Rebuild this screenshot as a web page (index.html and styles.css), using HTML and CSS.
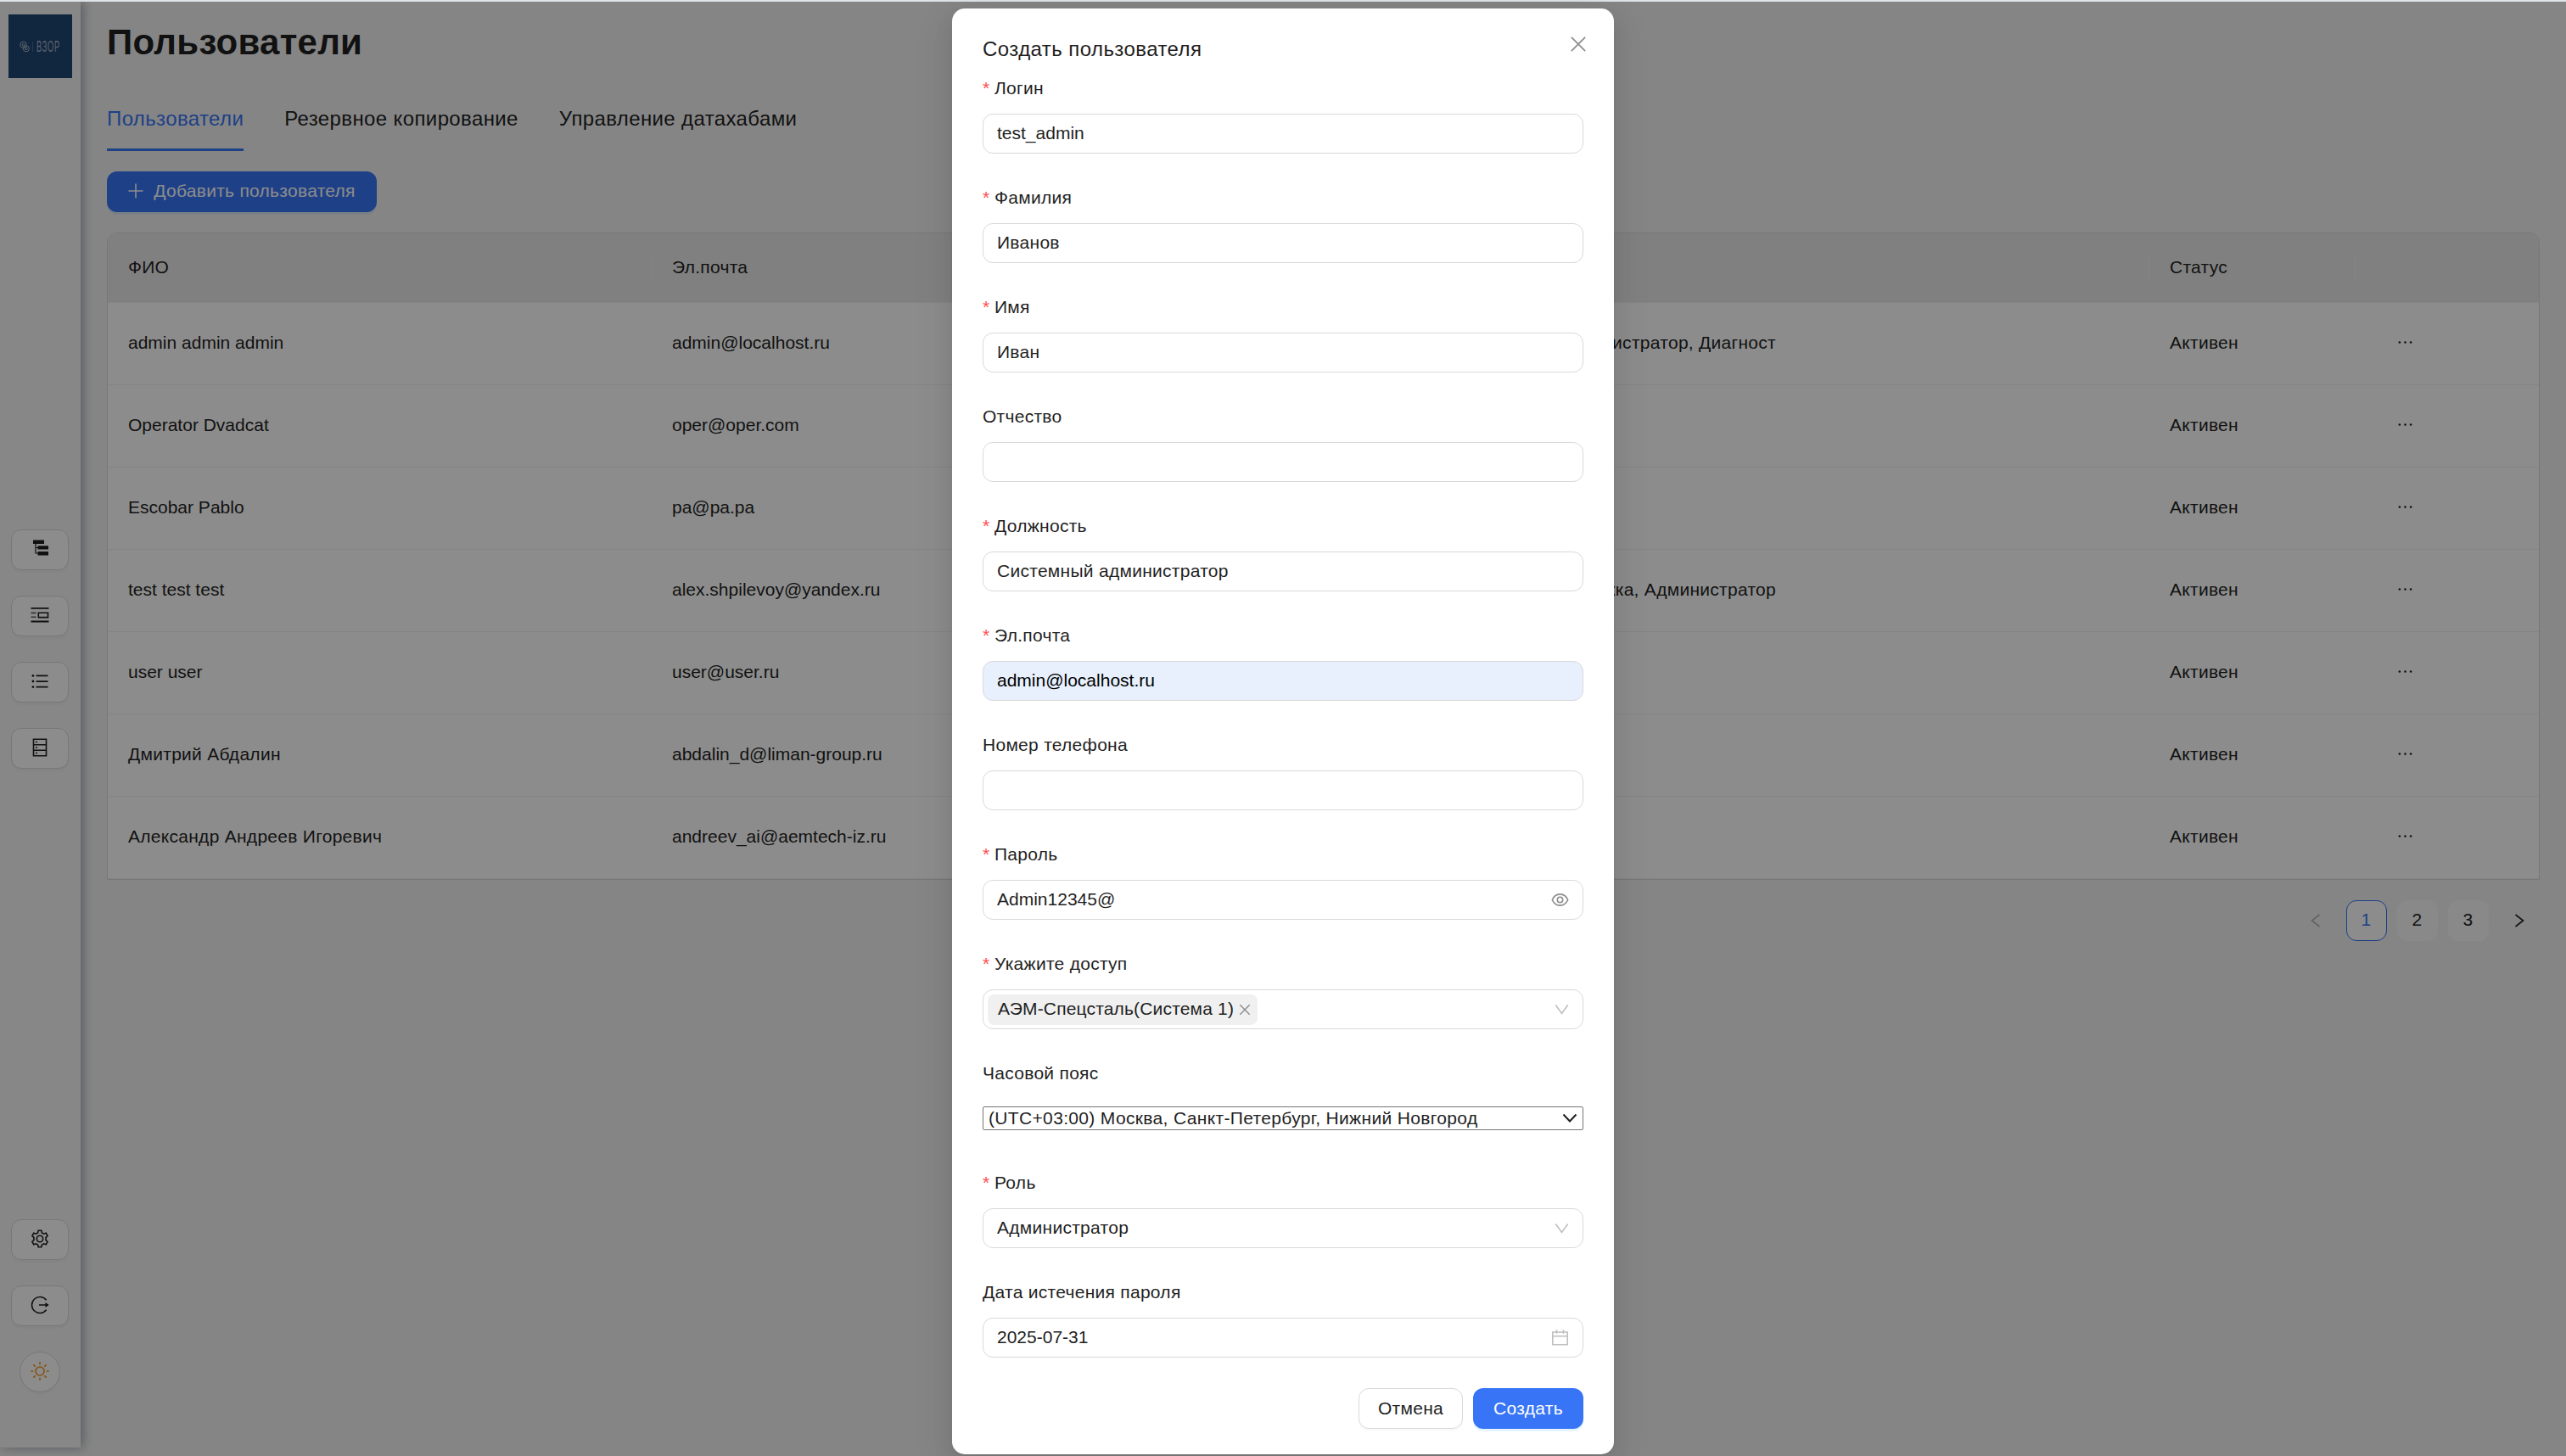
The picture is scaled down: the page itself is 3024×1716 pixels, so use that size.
FILE: index.html
```html
<!DOCTYPE html>
<html lang="ru">

<head>
    <meta charset="UTF-8">
    <meta name="viewport" content="width=device-width, initial-scale=1.0">
    <title>Пользователи</title>
    <link rel="stylesheet" href="styles.css">
</head>

<body>
    <!-- shared icons -->
    <svg class="sprite">
        <symbol id="i-close" viewBox="0 0 16 16"><path d="M1.5 1.5l13 13M14.5 1.5l-13 13" /></symbol>
        <symbol id="i-down" viewBox="0 0 16 16"><path d="M1.2 3.4l6.8 9.2 6.8-9.2" /></symbol>
        <symbol id="i-dots" viewBox="0 0 21 21"><circle cx="3.9" cy="10.5" r="1.3" /><circle cx="10.5" cy="10.5" r="1.3" /><circle cx="17.1" cy="10.5" r="1.3" /></symbol>
    </svg>

    <div class="layout">
        <aside class="sidebar">
            <div class="logo">
                <svg class="logo-gears" viewBox="0 0 12 14"><circle cx="4.5" cy="4.8" r="3.8" /><circle cx="4.5" cy="4.8" r="1.4" /><circle cx="7.8" cy="9.4" r="3.5" /><circle cx="7.8" cy="9.4" r="1.3" /></svg>
                <span class="logo-line"></span>
                <span class="logo-text">ВЗОР</span>
            </div>
            <nav class="menu">
                <button class="menu-btn">
                    <svg class="icon" viewBox="0 1.5 22 22"><path class="solid" d="M3 2h13v4.500H3zM8.500 8.800H21v4.200H8.500zM8.500 15.500H21v4.500H8.500z" /><path class="thin" d="M6 6v11.500h3M6 11h3" /></svg>
                </button>
                <button class="menu-btn">
                    <svg class="icon" viewBox="0 0 22 22"><path class="solid" d="M.5 2h21v1.800H.5zM.5 17.600h21v1.800H.5z" /><path class="solid faded" d="M.5 7.600h6v1.600h-6zM.5 12.400h6v1.600h-6z" /><path d="M9.300 8.200h11.200v5.400H9.300z" /></svg>
                </button>
                <button class="menu-btn">
                    <svg class="icon" viewBox="0 0 22 22"><path class="solid" d="M6.500 3.600h14v1.700h-14zM6.500 10.200h14v1.700h-14zM6.500 16.800h14v1.700h-14z" /><circle class="solid" cx="2.900" cy="4.400" r="1.400" /><circle class="solid" cx="2.900" cy="11" r="1.400" /><circle class="solid" cx="2.900" cy="17.600" r="1.400" /></svg>
                </button>
                <button class="menu-btn">
                    <svg class="icon" viewBox="0 0 22 22"><path d="M3.500 1.300h15v19.500h-15zM3.500 7.800h15M3.500 14.300h15" /><circle class="solid" cx="7" cy="4.600" r="1" /><circle class="solid" cx="7" cy="11.100" r="1" /><circle class="solid" cx="7" cy="17.500" r="1" /></svg>
                </button>
            </nav>
            <nav class="menu menu-bottom">
                <button class="menu-btn">
                    <svg class="icon" viewBox="0 0 22 22"><path d="M9.200 1.300h3.600l.6 2.700 2.200 1.200 2.600-.9 1.900 3.200-2 1.900v3.200l2 1.900-1.900 3.200-2.600-.9-2.200 1.200-.6 2.700H9.200l-.6-2.700-2.200-1.200-2.600.9-1.900-3.200 2-1.900V9.400l-2-1.900 1.900-3.200 2.600.9L8.600 4z" /><circle cx="11" cy="11" r="3.700" /></svg>
                </button>
                <button class="menu-btn">
                    <svg class="icon" viewBox="0 0 22 22"><path d="M18.600 5.300a9.500 9.500 0 1 0 0 11.400M10 11h8" /><path class="solid" d="M17.500 8l4.200 3-4.200 3z" /></svg>
                </button>
                <button class="menu-btn round">
                    <svg class="icon sun" viewBox="0 0 22 22"><circle cx="11" cy="11" r="5" /><path d="M11 .3v3M11 18.700v3M.3 11h3M18.700 11h3M3.400 3.400l2.200 2.200M16.400 16.400l2.200 2.200M3.400 18.600l2.200-2.200M16.400 5.600l2.200-2.200" /></svg>
                </button>
            </nav>
        </aside>

        <main class="content">
            <h1 class="title">Пользователи</h1>
            <div class="tabs">
                <div class="tab active">Пользователи</div>
                <div class="tab">Резервное копирование</div>
                <div class="tab">Управление датахабами</div>
            </div>
            <button class="btn btn-primary btn-add">
                <svg class="icon-plus" viewBox="0 0 18 18"><path d="M9 .5v17M.5 9h17" /></svg>
                Добавить пользователя
            </button>

            <table class="users">
                <colgroup>
                    <col class="col-name">
                    <col class="col-mail">
                    <col class="col-role">
                    <col class="col-status">
                    <col class="col-actions">
                </colgroup>
                <thead>
                    <tr>
                        <th>ФИО</th>
                        <th>Эл.почта</th>
                        <th></th>
                        <th>Статус</th>
                        <th></th>
                    </tr>
                </thead>
                <tbody>
                    <tr>
                        <td class="latin">admin admin admin</td>
                        <td class="latin">admin@localhost.ru</td>
                        <td class="role">Администратор, Диагност</td>
                        <td>Активен</td>
                        <td class="actions"><svg class="dots"><use href="#i-dots" /></svg></td>
                    </tr>
                    <tr>
                        <td class="latin">Operator Dvadcat</td>
                        <td class="latin">oper@oper.com</td>
                        <td class="role"></td>
                        <td>Активен</td>
                        <td class="actions"><svg class="dots"><use href="#i-dots" /></svg></td>
                    </tr>
                    <tr>
                        <td class="latin">Escobar Pablo</td>
                        <td class="latin">pa@pa.pa</td>
                        <td class="role"></td>
                        <td>Активен</td>
                        <td class="actions"><svg class="dots"><use href="#i-dots" /></svg></td>
                    </tr>
                    <tr>
                        <td class="latin">test test test</td>
                        <td class="latin">alex.shpilevoy@yandex.ru</td>
                        <td class="role">Техподдержка, Администратор</td>
                        <td>Активен</td>
                        <td class="actions"><svg class="dots"><use href="#i-dots" /></svg></td>
                    </tr>
                    <tr>
                        <td class="latin">user user</td>
                        <td class="latin">user@user.ru</td>
                        <td class="role"></td>
                        <td>Активен</td>
                        <td class="actions"><svg class="dots"><use href="#i-dots" /></svg></td>
                    </tr>
                    <tr>
                        <td>Дмитрий Абдалин</td>
                        <td class="latin">abdalin_d@liman-group.ru</td>
                        <td class="role"></td>
                        <td>Активен</td>
                        <td class="actions"><svg class="dots"><use href="#i-dots" /></svg></td>
                    </tr>
                    <tr>
                        <td>Александр Андреев Игоревич</td>
                        <td class="latin">andreev_ai@aemtech-iz.ru</td>
                        <td class="role"></td>
                        <td>Активен</td>
                        <td class="actions"><svg class="dots"><use href="#i-dots" /></svg></td>
                    </tr>
                </tbody>
            </table>

            <div class="pagination">
                <span class="page arrow disabled"><svg viewBox="0 0 12 16"><path d="M10.500 1L1.500 8l9 7" /></svg></span>
                <span class="page current">1</span>
                <span class="page">2</span>
                <span class="page">3</span>
                <span class="page arrow"><svg viewBox="0 0 12 16"><path d="M1.500 1l9 7-9 7" /></svg></span>
            </div>
        </main>
    </div>

    <div class="mask">
        <div class="modal">
            <div class="modal-title">Создать пользователя</div>
            <svg class="modal-close"><use href="#i-close" /></svg>

            <form class="form">
                <div class="form-item">
                    <label class="required">Логин</label>
                    <div class="input latin">test_admin</div>
                </div>
                <div class="form-item">
                    <label class="required">Фамилия</label>
                    <div class="input">Иванов</div>
                </div>
                <div class="form-item">
                    <label class="required">Имя</label>
                    <div class="input">Иван</div>
                </div>
                <div class="form-item">
                    <label>Отчество</label>
                    <div class="input"></div>
                </div>
                <div class="form-item">
                    <label class="required">Должность</label>
                    <div class="input">Системный администратор</div>
                </div>
                <div class="form-item">
                    <label class="required">Эл.почта</label>
                    <div class="input latin autofill">admin@localhost.ru</div>
                </div>
                <div class="form-item">
                    <label>Номер телефона</label>
                    <div class="input"></div>
                </div>
                <div class="form-item">
                    <label class="required">Пароль</label>
                    <div class="input latin">
                        Admin12345@
                        <svg class="suffix eye" viewBox="0 0 21 21"><path d="M1.300 10.500C3.300 6 6.500 3.900 10.500 3.900s7.200 2.100 9.200 6.600c-2 4.500-5.200 6.600-9.200 6.600s-7.200-2.100-9.200-6.600z" /><circle cx="10.500" cy="10.500" r="3.200" /></svg>
                    </div>
                </div>
                <div class="form-item">
                    <label class="required">Укажите доступ</label>
                    <div class="input multiple">
                        <span class="tag">АЭМ-Спецсталь(Система 1)<svg class="tag-close"><use href="#i-close" /></svg></span>
                        <svg class="suffix arrow-down"><use href="#i-down" /></svg>
                    </div>
                </div>
                <div class="form-item">
                    <label>Часовой пояс</label>
                    <div class="native-row">
                        <div class="native-select">
                            <span>(UTC+03:00) Москва, Санкт-Петербург, Нижний Новгород</span>
                            <svg class="native-arrow" viewBox="0 0 18 12"><path d="M1.500 1.500L9 9.500l7.500-8" /></svg>
                        </div>
                    </div>
                </div>
                <div class="form-item">
                    <label class="required">Роль</label>
                    <div class="input">
                        Администратор
                        <svg class="suffix arrow-down"><use href="#i-down" /></svg>
                    </div>
                </div>
                <div class="form-item">
                    <label>Дата истечения пароля</label>
                    <div class="input latin">
                        2025-07-31
                        <svg class="suffix calendar" viewBox="0 0 21 21"><path d="M1.800 4h17.400v14.800H1.800zM1.800 8.800h17.400M6.500 1.300v4.400M14.500 1.300v4.400" /></svg>
                    </div>
                </div>
            </form>

            <div class="modal-footer">
                <button class="btn btn-default">Отмена</button>
                <button class="btn btn-primary btn-create">Создать</button>
            </div>
        </div>
    </div>
</body>

</html>
```

FILE: styles.css
```css
* {
    box-sizing: border-box;
}

body {
    margin: 0;
    height: 1716px;
    overflow: hidden;
    border-top: 2px solid #dde3e8;
    background-color: #f3f3f3;
    font-family: 'Liberation Sans', Arial, sans-serif;
    font-size: 21px;
    line-height: 33px;
    letter-spacing: 0.28px;
    color: #1f1f1f;
}

svg {
    display: block;
    fill: none;
    stroke: currentColor;
    stroke-width: 1.6;
}

button {
    font-family: inherit;
    font-size: inherit;
    line-height: inherit;
    letter-spacing: inherit;
    color: inherit;
}

.sprite {
    display: none;
}

.latin {
    letter-spacing: 0;
}

.solid {
    fill: currentColor;
    stroke: none;
}

.thin {
    stroke-width: 1.2;
}

.faded {
    opacity: 0.7;
}

.layout {
    display: flex;
    height: 1714px;
}

/* Sidebar */
.sidebar {
    width: 95px;
    height: 1704px;
    flex-shrink: 0;
    display: flex;
    flex-direction: column;
    align-items: center;
    padding-top: 15px;
    background-color: #f6f6f6;
    box-shadow: 3px 0 12px rgba(0, 21, 41, 0.35);
}

.logo {
    display: flex;
    align-items: center;
    gap: 3px;
    width: 75px;
    height: 75px;
    padding-left: 13px;
    background-color: #1f4573;
    color: #a9b6c6;
}

.logo-gears {
    width: 12px;
    height: 14px;
    stroke-width: 1;
}

.logo-line {
    width: 1px;
    height: 12px;
    margin-right: 1px;
    background-color: #4d678a;
}

.logo-text {
    width: 28px;
    font-size: 18px;
    line-height: 18px;
    letter-spacing: 1.5px;
    transform: scaleX(0.52);
    transform-origin: left;
}

.menu {
    display: flex;
    flex-direction: column;
    align-items: center;
    gap: 30px;
    margin-top: 532px;
    margin-right: 1px;
}

.menu-bottom {
    margin-top: 531px;
}

.menu-btn {
    display: flex;
    align-items: center;
    justify-content: center;
    width: 68px;
    height: 48px;
    padding: 0 0 3px;
    border: 1px solid #d9d9d9;
    border-radius: 12px;
    background-color: #fff;
    box-shadow: 0 3px 0 rgba(0, 0, 0, 0.02);
}

.menu-bottom .menu-btn {
    padding-bottom: 2px;
}

.menu-btn.round {
    width: 48px;
    border-radius: 50%;
}

.icon {
    width: 22px;
    height: 22px;
}

.sun {
    color: #f0971c;
}

/* Content */
.content {
    flex: 1;
    padding: 16px 31px 0;
}

.title {
    margin: 0;
    font-size: 42px;
    line-height: 63px;
    font-weight: 700;
}

.tabs {
    display: flex;
    gap: 48px;
    height: 97px;
    padding-top: 40px;
    border-bottom: 1px solid #f0f0f0;
    font-size: 24px;
    line-height: 38px;
    letter-spacing: 0.38px;
}

.tab {
    height: 57px;
    white-space: nowrap;
}

.tab.active {
    color: #3875f6;
    border-bottom: 3px solid #3875f6;
}

.btn {
    display: flex;
    align-items: center;
    justify-content: center;
    height: 48px;
    border: 1px solid #d9d9d9;
    border-radius: 12px;
    padding: 0 0 2px;
    background-color: #fff;
    box-shadow: 0 3px 0 rgba(0, 0, 0, 0.02);
    white-space: nowrap;
}

.btn-primary {
    border: none;
    background-color: #3875f6;
    color: #fff;
    box-shadow: 0 3px 0 rgba(5, 145, 255, 0.1);
}

.btn-add {
    width: 318px;
    margin-top: 24px;
    padding-bottom: 3px;
    gap: 12px;
}

.icon-plus {
    width: 18px;
    height: 18px;
}

/* Table */
.users {
    width: 2867px;
    margin-top: 24px;
    table-layout: fixed;
    border-collapse: separate;
    border-spacing: 0;
    border: 1px solid #d9d9d9;
    border-radius: 12px 12px 0 0;
    background-color: #fff;
}

.col-name {
    width: 641px;
}

.col-mail {
    width: 640px;
}

.col-status {
    width: 243px;
}

.col-actions {
    width: 216px;
}

.users th {
    height: 82px;
    padding: 0 24px 2px;
    text-align: left;
    font-weight: 400;
    background: linear-gradient(#f0f0f0, #f0f0f0) right center / 1px 33px no-repeat #e9e9e9;
    border-bottom: 1px solid #f0f0f0;
}

.users th:nth-child(2),
.users th:last-child {
    background-image: none;
}

.users th:first-child {
    border-top-left-radius: 11px;
}

.users th:last-child {
    border-top-right-radius: 11px;
}

.users td {
    height: 97px;
    padding: 0 24px 4px;
    border-bottom: 1px solid #f0f0f0;
    white-space: nowrap;
}

.users .role {
    text-align: right;
    padding-right: 440px;
}

.users .actions {
    padding-left: 48px;
}

.dots {
    width: 21px;
    height: 21px;
    fill: currentColor;
    stroke: none;
}

/* Pagination */
.pagination {
    display: flex;
    justify-content: flex-end;
    gap: 12px;
    margin-top: 24px;
}

.page {
    display: flex;
    align-items: center;
    justify-content: center;
    width: 48px;
    height: 48px;
    padding: 0 1px 3px 0;
    border-radius: 12px;
    background-color: #f9f9f9;
}

.page.current {
    border: 1px solid #3875f6;
    color: #3875f6;
    background-color: #fff;
}

.page.arrow {
    padding: 0;
    background: none;
}

.page.arrow svg {
    width: 12px;
    height: 16px;
}

.page.disabled {
    color: #b5b5b5;
}

/* Modal */
.mask {
    position: absolute;
    top: 2px;
    left: 0;
    width: 3024px;
    height: 1714px;
    display: flex;
    justify-content: center;
    align-items: flex-start;
    padding-top: 8px;
    background-color: rgba(0, 0, 0, 0.45);
}

.modal {
    position: relative;
    width: 780px;
    height: 1704px;
    padding: 30px 36px;
    border-radius: 15px;
    background-color: #fff;
    box-shadow: 0 9px 24px rgba(0, 0, 0, 0.08), 0 5px 9px -6px rgba(0, 0, 0, 0.12), 0 14px 42px 12px rgba(0, 0, 0, 0.05);
}

.modal-title {
    height: 36px;
    margin-bottom: 12px;
    font-size: 24px;
    line-height: 36px;
    letter-spacing: 0.43px;
}

.modal-close {
    position: absolute;
    top: 32px;
    right: 32px;
    width: 20px;
    height: 20px;
    color: #8c8c8c;
    stroke-width: 1.4;
}

.form-item {
    height: 129px;
}

label {
    display: block;
    height: 33px;
    margin-bottom: 13px;
    line-height: 32px;
}

.required::before {
    content: '*';
    display: inline-block;
    width: 8px;
    margin-right: 6px;
    color: #ff4d4f;
}

.input {
    display: flex;
    align-items: center;
    justify-content: space-between;
    height: 47px;
    padding: 0 16px 3px;
    border: 1px solid #d9d9d9;
    border-radius: 12px;
}

.autofill {
    background-color: #e8f0fe;
    color: #000;
}

.suffix {
    width: 21px;
    height: 21px;
    margin-top: 2px;
    color: #8c8c8c;
}

.arrow-down {
    width: 17px;
    height: 17px;
    color: #bfbfbf;
}

.calendar {
    color: #bfbfbf;
}

.multiple {
    padding: 0 16px 0 5px;
}

.multiple .suffix {
    margin-top: 0;
}

.tag {
    display: flex;
    align-items: center;
    gap: 6px;
    height: 36px;
    padding: 0 8px 3px 12px;
    border-radius: 8px;
    background-color: #f0f0f0;
    letter-spacing: 0.17px;
}

.tag-close {
    width: 14px;
    height: 14px;
    margin-top: 3px;
    color: #8c8c8c;
}

.native-row {
    display: flex;
    align-items: center;
    height: 47px;
    padding-bottom: 1px;
}

.native-select {
    display: flex;
    align-items: center;
    justify-content: space-between;
    width: 100%;
    height: 28px;
    padding: 0 6px 1px;
    border: 1px solid #767676;
    border-radius: 2px;
    letter-spacing: 0.34px;
}

.native-arrow {
    width: 18px;
    height: 12px;
    stroke-width: 2;
}

.modal-footer {
    display: flex;
    justify-content: flex-end;
    gap: 12px;
}

.btn-default {
    width: 123px;
}

.btn-create {
    width: 130px;
}
```
